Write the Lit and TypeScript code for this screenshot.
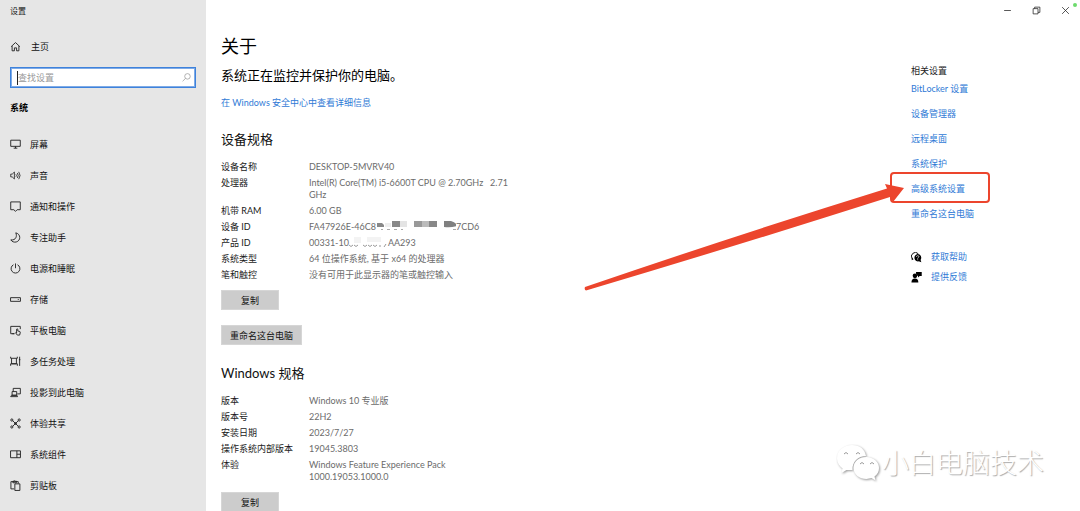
import { LitElement, html, css, svg } from "lit";
import { customElement, state } from "lit/decorators.js";

const icon = (body: unknown, cls = "icon") =>
  html`<svg class=${cls} viewBox="0 0 12 12" aria-hidden="true">${body}</svg>`;

const glyphs = {
  home: svg`<path d="M1.2 6.2 6 1.7l4.800 4.500M2.300 5.500v5.200h2.500V7.500h2.400v3.200h2.500V5.500"/>`,
  display: svg`<path d="M.8 1.300h10.400v6.700H.8zM6 8v2M4 10h4"/>`,
  sound: svg`<path d="M.8 4.500h1.600L4.800 2.200v7.600L2.400 7.500H.8zM6.500 4.700q1 1.300 0 2.600M8 3.300q2 2.700 0 5.400M9.500 2q3 4 0 8" stroke-width=".9"/>`,
  notify: svg`<path d="M.8 1h10.400v8.500H7.800L6 11.300 4.200 9.500H.8z"/>`,
  moon: svg`<path d="M6.300.9C12 2.200 12 9.500 6.800 10.900 4.500 11.500 2 10.500.9 8.600 6.500 9.300 8 4.500 6.300.9z"/>`,
  power: svg`<path d="M6 .5v5.200M3.800 1.900a4.800 4.800 0 1 0 4.400 0"/>`,
  storage: svg`<path d="M.6 4h10.800v4H.6zM8.500 6h1"/>`,
  tablet: svg`<path d="M5 9.500H.8V1.500h10.400v3M2.500 9.500h2M7.200 8.800V4.500q.7-.8 1.300 0v2l2.300.6q.6.300.3 1.600l-.6 2.300H8L6 8.500q.2-.8 1.200 0"/>`,
  multitask: svg`<path d="M.7.800v1.700h7.300V.8M1.700 2.500v6h5.300v-6M.7 10.700V8.500h7.300v2.200M10.500.800v10M9.700 4h1.600"/>`,
  project: svg`<path d="M3.500 5V1.500h7.800v6H8M2.300 5h5v4h-5zM.7 10.500h7.600L7.500 9H1.700z"/>`,
  share: svg`<path d="m3 3 6 6M9 3 3 9"/><circle cx="2" cy="2.200" r="1.200"/><circle cx="10" cy="2.200" r="1.200"/><circle cx="2" cy="9.800" r="1.200"/><circle cx="10" cy="9.800" r="1.200"/><circle cx="6" cy="6" r="1"/>`,
  parts: svg`<path d="M.6 2h10.800v7.500H.6zM7.500 2v7.500M7.500 5.700h3.700"/>`,
  clipboard: svg`<path d="M4.500 9.700H1V1.800h8v2M3.200 3V1.300h1.200q.7-1 1.400 0H7V3zM5.300 4.200h5.500v7.200H5.300z"/>`,
  remote: svg`<path d="M2 8 9 1M5 11l6-6"/>`,
  search: svg`<circle cx="7.300" cy="4.500" r="3.700"/><path d="M4.700 7.200.800 11"/>`,
};

const menu: [keyof typeof glyphs, string][] = [
  ["display", "屏幕"], ["sound", "声音"], ["notify", "通知和操作"], ["moon", "专注助手"],
  ["power", "电源和睡眠"], ["storage", "存储"], ["tablet", "平板电脑"], ["multitask", "多任务处理"],
  ["project", "投影到此电脑"], ["share", "体验共享"], ["parts", "系统组件"], ["clipboard", "剪贴板"],
  ["remote", "远程桌面"],
];

const device: [string, string, string?][] = [
  ["设备名称", "DESKTOP-5MVRV40"],
  ["处理器", "Intel(R) Core(TM) i5-6600T CPU @ 2.70GHz \u00a0 2.71 GHz"],
  ["机带 RAM", "6.00 GB"],
  ["设备 ID", "FA47926E-46C8", "device"],
  ["产品 ID", "00331-10", "product"],
  ["系统类型", "64 位操作系统, 基于 x64 的处理器"],
  ["笔和触控", "没有可用于此显示器的笔或触控输入"],
];

const windowsInfo: [string, string, string?][] = [
  ["版本", "Windows 10 专业版"],
  ["版本号", "22H2"],
  ["安装日期", "2023/7/27"],
  ["操作系统内部版本", "19045.3803"],
  ["体验", "Windows Feature Experience Pack 1000.19053.1000.0"],
];

@customElement("app-root")
export class AppRoot extends LitElement {
  @state() private query = "";

  static styles = css`
    :host {
      display: block;
      height: 100vh;
      overflow: hidden;
      position: relative;
      background: #fff;
      color: #1a1a1a;
      font: 9px/12px Lato, "Noto Sans CJK SC", sans-serif;
    }
    * { box-sizing: border-box; }
    h1, h2, h3, p, ul, dl, dd { margin: 0; padding: 0; font-weight: 400; }
    ul { list-style: none; }
    a { color: #2f7ad6; text-decoration: none; }
    .shell { display: flex; height: 100%; }
    .side { flex: 0 0 206px; background: #e6e6e6; padding: 5px 10px 0; overflow: hidden; }
    .title { font-size: 8px; line-height: 12px; }
    .icon { width: 11px; height: 11px; flex: none; fill: none; stroke: #222; stroke-width: 1; }
    .nav { display: flex; align-items: center; gap: 9px; height: 31px; color: #111; }
    .home { margin-top: 14px; gap: 10px; }
    .search { display: flex; align-items: center; height: 21px; margin-top: 5px; padding: 0 4px 0 6px; background: #fff; border: 1px solid #3e82dc; outline: 1px solid #7fabe6; outline-offset: -2px; }
    .search input { flex: 1; min-width: 0; height: 14px; padding: 0; border: 0; border-left: 1px solid #222; outline: 0; background: none; font: inherit; color: #222; }
    .search input::placeholder { color: #999; opacity: 1; }
    .search .icon { stroke: #999; width: 9px; height: 9px; }
    .group { font-size: 9px; line-height: 12px; font-weight: 700; margin: 14px 0 15px; color: #000; }
    .main { flex: 1; min-width: 0; display: flex; justify-content: space-between; padding: 0 90px 0 15px; }
    .about { flex: 0 1 300px; padding-top: 34px; }
    h1 { font-size: 18px; line-height: 24px; color: #000; }
    .status { font-size: 13px; line-height: 18px; margin-top: 8px; color: #000; }
    .detail { margin-top: 13px; }
    h2 { font-size: 13px; line-height: 18px; margin-top: 21px; color: #111; }
    .actions + h2 { margin-top: 19px; }
    .specs { display: grid; grid-template-columns: 88px 200px; row-gap: 4px; margin-top: 13px; }
    dd { color: #6b6b6b; }
    .actions { display: flex; flex-direction: column; align-items: flex-start; gap: 15px; margin-top: 9px; }
    button { font: inherit; color: #111; border: 1px solid #d6d6d6; background: #ccc; height: 20px; padding: 2px 8px 0; min-width: 58px; }
    .masked { display: flex; }
    .blot { height: 12px; }
    .related { flex: 0 0 79px; padding-top: 65px; }
    h3 { font-size: 9px; line-height: 12px; }
    .links { display: flex; flex-direction: column; gap: 13px; margin-top: 6px; white-space: nowrap; }
    .links .marked { position: relative; }
    .frame { position: absolute; left: -21px; top: -11px; width: 100px; height: 31px; border: 2px solid #ec452d; border-radius: 4px; pointer-events: none; }
    .help { display: grid; gap: 8px; margin-top: 31px; }
    .help a { display: flex; gap: 9px; align-items: center; }
    .solid { width: 11px; height: 11px; flex: none; fill: #000; }
    .controls { position: absolute; top: 0; right: 0; display: flex; }
    .controls button { min-width: 0; width: 29px; height: 21px; padding: 0; border: 0; background: none; display: grid; place-items: center; }
    .controls .icon { width: 9px; height: 9px; }
    .dot { position: absolute; right: 3px; top: 3px; width: 4px; height: 4px; border-radius: 50%; background: #6ddb6d; }
    .arrow { position: absolute; left: 584px; top: 180px; width: 322px; height: 112px; fill: #ec452d; pointer-events: none; }
    .mark { position: absolute; right: 36px; bottom: 29px; display: flex; align-items: center; gap: 1px; color: #fff; font-size: 27px; line-height: 38px; font-weight: 300; text-shadow: 1px 1px 1px #aaa; }
    .wechat { width: 44px; height: 38px; fill: #fff; filter: drop-shadow(1px 1px 1px #999); }
  `;

  private value(text: string, mask?: string) {
    if (mask === "device")
      return html`<span class="masked">${text}<svg class="blot" width="80" height="12" viewBox="2 0 80 12" aria-hidden="true">
        <path fill="#888" d="M3 2h5l2 2v2H3z"/><path fill="#eee" d="M11 2h6v4h-6z"/><path fill="#888" d="M18 0h8v6h-8z"/><path fill="#e4e4e4" d="M26 0h7v6h-7z"/><path fill="#999" d="M40 0h8v6h-8z"/><path fill="#bbb" d="M48 0h7v6h-7z"/><path fill="#888" d="M55 0h8v6h-8z"/><path fill="#808080" d="M70 0h7q6 2 6 5-6 2-13 1z"/><path stroke="#aaa" d="M7 8.500h2m4 0h3m4 0h3m4 0h2m50 0h3"/></svg>7CD6</span>`;
    if (mask === "product")
      return html`<span class="masked">${text}<svg class="blot" width="39" height="12" viewBox="0 0 39 12" aria-hidden="true">
        <path fill="#f3f3f3" d="M5 0h7v6H5zM18 0h14v5H18z"/><path fill="none" stroke="#999" d="M0 8q2 3 4 0m1 0q2 3 4 0m5 0q2 3 4 0m1 0q2 3 4 0m1 0q2 3 4 0m3 0v2m4 0 2-3"/></svg>AA293</span>`;
    return text;
  }

  private specs(rows: [string, string, string?][]) {
    return html`<dl class="specs">${rows.map(([k, v, m]) => html`<dt>${k}</dt><dd>${this.value(v, m)}</dd>`)}</dl>`;
  }

  render() {
    return html`
      <div class="shell">
        <nav class="side" aria-label="设置">
          <div class="title">设置</div>
          <a class="nav home" href="#home">${icon(glyphs.home)}<span>主页</span></a>
          <label class="search">
            <input type="text" aria-label="查找设置" placeholder="查找设置" .value=${this.query}
              @input=${(e: Event) => (this.query = (e.target as HTMLInputElement).value)} />
            ${icon(glyphs.search)}
          </label>
          <h3 class="group">系统</h3>
          <ul>${menu.map(([g, t]) => html`<li><a class="nav" href="#${g}">${icon(glyphs[g])}<span>${t}</span></a></li>`)}</ul>
        </nav>
        <main class="main">
          <section class="about">
            <h1>关于</h1>
            <p class="status">系统正在监控并保护你的电脑。</p>
            <p class="detail"><a href="#security">在 Windows 安全中心中查看详细信息</a></p>
            <h2>设备规格</h2>
            ${this.specs(device)}
            <div class="actions"><button>复制</button><button>重命名这台电脑</button></div>
            <h2>Windows 规格</h2>
            ${this.specs(windowsInfo)}
            <div class="actions"><button>复制</button></div>
          </section>
          <aside class="related">
            <h3>相关设置</h3>
            <div class="links">
              <a href="#bitlocker">BitLocker 设置</a>
              <a href="#devices">设备管理器</a>
              <a href="#remote">远程桌面</a>
              <a href="#protect">系统保护</a>
              <a class="marked" href="#advanced">高级系统设置<span class="frame"></span></a>
              <a href="#rename">重命名这台电脑</a>
            </div>
            <div class="help">
              <a href="#help">${icon(svg`<path d="M1.500 7.500A4 4 0 1 1 8 2" fill="none" stroke="#000"/><path d="M.8 9V6l2 2zM7.300 2.300a4 4 0 0 1 3.200 6.300l.8 2.600-2.800-1A4 4 0 1 1 7.300 2.300z"/><path d="M5.900 5.200q.2-1.200 1.400-1.200 1.300 0 1.300 1.100 0 .7-1.300 1.400v.7m0 .8v.9" fill="none" stroke="#fff" stroke-width=".8"/>`, "solid")}获取帮助</a>
              <a href="#feedback">${icon(svg`<circle cx="4.300" cy="4.200" r="2.500"/><path d="M.5 11.500Q.5 7 4.300 7T8 11.500zM5.500 0h6.200v4.300H9.500L7.600 6V4.300H7Q7 2.800 5.500 2z"/>`, "solid")}提供反馈</a>
            </div>
          </aside>
        </main>
      </div>
      <div class="controls">
        <button aria-label="最小化">${icon(svg`<path d="M1.500 6h9"/>`)}</button>
        <button aria-label="还原">${icon(svg`<path d="M1.500 3.500h6.500V10.500H1.500zM3.500 3.500v-2H10.500v7H8"/>`)}</button>
        <button aria-label="关闭">${icon(svg`<path d="m1.500 1.500 9 9m0-9-9 9"/>`)}</button>
      </div>
      <span class="dot"></span>
      <svg class="arrow" viewBox="0 0 322 112" aria-hidden="true"><path d="M1 107Q150 56 303 8.500L301 4l19 4-11 14-3-5Q155 65 2 110.500q-2-1-1-3.500z"/></svg>
      <div class="mark">
        <svg class="wechat" viewBox="0 0 44 38" aria-hidden="true"><path d="M15 1C7 1 0 6.500 0 14c0 5 2.500 8 5.500 10.300L4.500 29l5-3h6C15 18 21 12 29 12 28 5.500 23 1 15 1zM29.500 13C22 13 16.500 17.500 16.500 24s6 11 13 11l5-1 4 2.500-1-4c3-2 4.500-5 4.500-8.500 0-6-5.500-11-12.500-11z"/><path fill="none" stroke="#999" d="M7 10q2-3 4 0m8 0q2-3 4 0M23 20q2-3 4 0m6 0q2-3 4 0"/></svg>
        <span>小白电脑技术</span>
      </div>
    `;
  }
}
